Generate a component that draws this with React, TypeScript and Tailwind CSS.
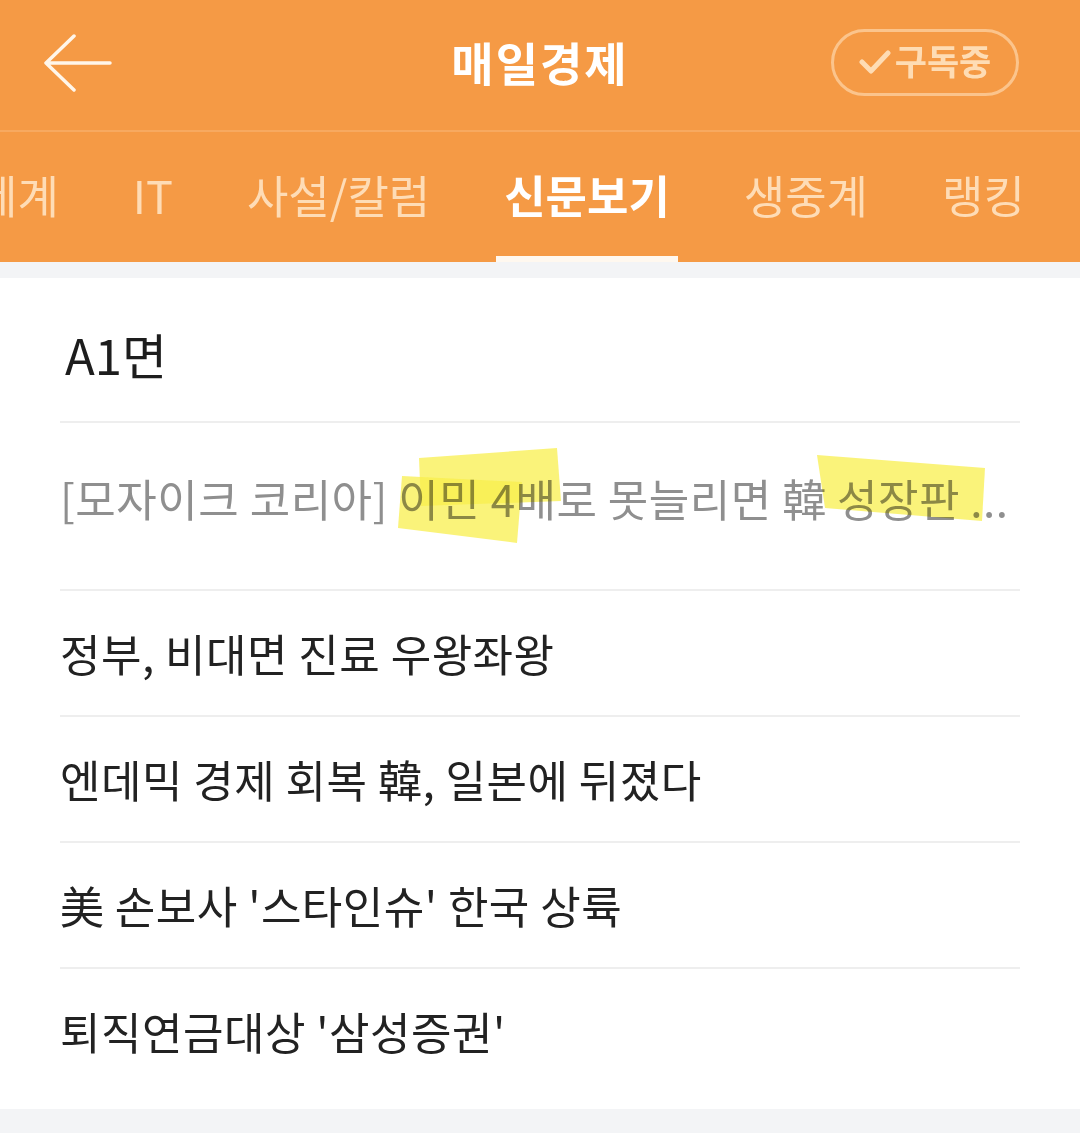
import React from "react";

const tabs = ["세계", "IT", "사설/칼럼", "신문보기", "생중계", "랭킹"];

const articles = [
  "정부, 비대면 진료 우왕좌왕",
  "엔데믹 경제 회복 韓, 일본에 뒤졌다",
  "美 손보사 '스타인슈' 한국 상륙",
];

const font = { fontFamily: '"Noto Sans CJK KR", "Noto Sans", sans-serif' };

export default function App() {
  return (
    <div className="w-[1080px] h-[1133px] bg-[#f3f4f6] overflow-hidden" style={font}>
      {/* top bar */}
      <div className="bg-[#f59a45]">
        <div className="h-[132px] flex items-center justify-between px-[44px] border-b-2 border-[#f7a960]">
          <svg width="68" height="60" viewBox="0 0 68 60" fill="none" className="-mt-[4px]">
            <path d="M2 30 H66 M30 3 L2 30 L30 57" stroke="#fff6ea" strokeWidth="3.5" strokeLinecap="round" strokeLinejoin="round" />
          </svg>
          <h1 className="absolute left-1/2 -translate-x-1/2 text-[46px] font-bold text-white tracking-[2px] -mt-[8px]">
            매일경제
          </h1>
          <button className="mr-[17px] -mt-[6px] h-[67px] w-[188px] rounded-full border-[3px] border-[#fbc48c] flex items-center justify-center gap-[4px] text-[#fedcb4] text-[35px] font-bold">
            <svg width="32" height="28" viewBox="0 0 32 28" fill="none">
              <path d="M3 14 L12 23 L29 5" stroke="#fedcb4" strokeWidth="5" strokeLinecap="round" strokeLinejoin="round" />
            </svg>
            <span className="-mt-[4px]">구독중</span>
          </button>
        </div>
        <div className="h-[130px] flex items-end ml-[-32px] gap-[58px]">
          {tabs.map((t) => {
            const active = t === "신문보기";
            return (
              <div key={t} className="flex flex-col items-stretch shrink-0">
                <span
                  className={
                    "px-2 text-[45px] leading-none pb-[39px] whitespace-nowrap " +
                    (active ? "text-white font-bold" : "text-[#fedcb6]")
                  }
                >
                  {t}
                </span>
                <div className={"h-[6px] " + (active ? "bg-[#fff8ef]" : "bg-transparent")} />
              </div>
            );
          })}
        </div>
      </div>

      {/* list card */}
      <div className="mt-[16px] bg-white px-[60px] pb-[16px]">
        <div className="h-[145px] flex items-center pt-[8px] pl-[5px] text-[49px] text-[#1d1d1d] border-b-2 border-[#eeeeee]">
          A1면
        </div>
        <div className="relative h-[168px] flex items-center pb-[16px] border-b-2 border-[#eeeeee]">
          <span className="text-[44px] tracking-[0.5px] text-[#8f8f8f] whitespace-nowrap">
            [모자이크 코리아] 이민 4배로 못늘리면 韓 성장판 ...
          </span>
          <svg className="absolute -left-[60px] top-0 w-[1080px] h-[168px] mix-blend-multiply pointer-events-none" viewBox="0 0 1080 168">
            <polygon points="419,35 557,25 561,78 421,83" fill="#f8ef4e" opacity="0.75" />
            <polygon points="402,53 522,59 517,120 398,105" fill="#f8ef4e" opacity="0.75" />
            <polygon points="817,32 985,45 982,98 825,85" fill="#f8ef4e" opacity="0.75" />
          </svg>
        </div>
        {articles.map((a) => (
          <div key={a} className="h-[126px] flex items-center border-b-2 border-[#eeeeee] text-[44px] tracking-[0.5px] text-[#222222] whitespace-nowrap">
            {a}
          </div>
        ))}
        <div className="h-[124px] flex items-center text-[44px] tracking-[0.5px] text-[#222222] whitespace-nowrap">
          퇴직연금대상 '삼성증권'
        </div>
      </div>
    </div>
  );
}
